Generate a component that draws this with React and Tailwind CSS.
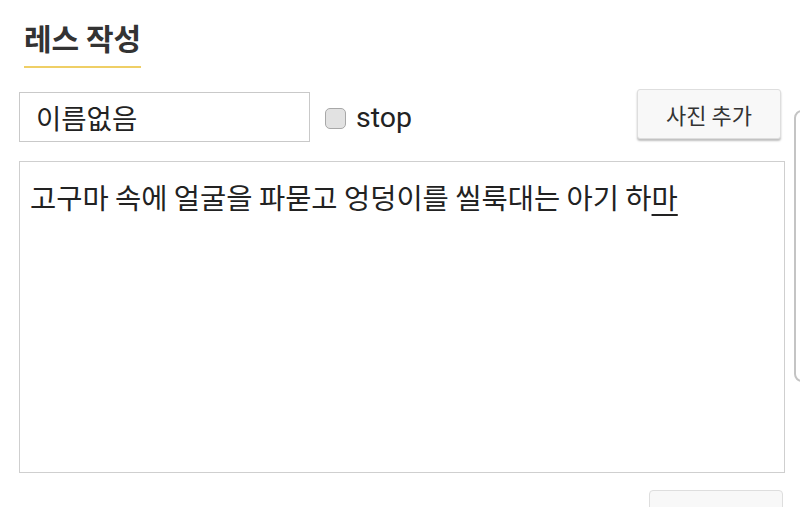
import { useState } from 'react';

const font = { fontFamily: '"Noto Sans CJK KR", "Noto Sans", Roboto, sans-serif' };

export default function App() {
  const [name, setName] = useState('이름없음');
  const [stop, setStop] = useState(false);

  return (
    <div className="flex h-[507px] w-[800px] overflow-hidden bg-white text-[#222]" style={font}>
      <div className="flex w-[785px] shrink-0 flex-col pl-[19px]">
        {/* header */}
        <div className="shrink-0 pl-[5px] pt-[22px]">
          <h2 className="inline-block border-b-2 border-[#efcf66] pb-[14px] text-[30px] font-bold leading-[30px] text-[#333]">
            레스 작성
          </h2>
        </div>

        {/* name / stop / photo */}
        <div className="mt-[21px] flex h-[53px] shrink-0 items-start">
          <input
            className="mt-[3px] h-[50px] w-[291px] border border-[#c9c9c9] bg-white px-[16px] text-[27.5px] outline-none"
            value={name}
            onChange={(event) => setName(event.target.value)}
          />
          <label className="ml-[15px] mt-[14px] flex items-center gap-[10px] text-[28.5px] leading-[30px]" style={{ fontFamily: 'Roboto, sans-serif' }}>
            <span
              className={`h-[21px] w-[21px] rounded-[5px] border border-[#a8a8a8] ${stop ? 'bg-[#888]' : 'bg-[#e2e2e2]'}`}
              onClick={() => setStop(!stop)}
            />
            stop
          </label>
          <button className="ml-auto mr-[4px] h-[50px] w-[144px] rounded-[3px] border border-[#dedede] bg-[#f8f8f8] text-[22px] text-[#333] shadow-[0_2px_2px_rgba(0,0,0,0.25)]">
            사진 추가
          </button>
        </div>

        {/* body */}
        <div className="mt-[19px] h-[312px] shrink-0 border border-[#cfcfcf] px-[10px] pt-[16px] text-[28.5px] leading-[38px]">
          고구마 속에 얼굴을 파묻고 엉덩이를 씰룩대는 아기 하<span className="underline underline-offset-[5px]">마</span>
        </div>

        <div className="mt-[17px] flex shrink-0 justify-end pr-[2px]">
          <button className="h-[40px] w-[134px] rounded-t-[4px] border border-[#dedede] bg-[#f8f8f8]" />
        </div>
      </div>

      {/* side panel edge */}
      <div className="ml-[9px] mt-[110px] h-[272px] w-[40px] shrink-0 rounded-[8px] border-2 border-[#c4c4c4]" />
    </div>
  );
}
